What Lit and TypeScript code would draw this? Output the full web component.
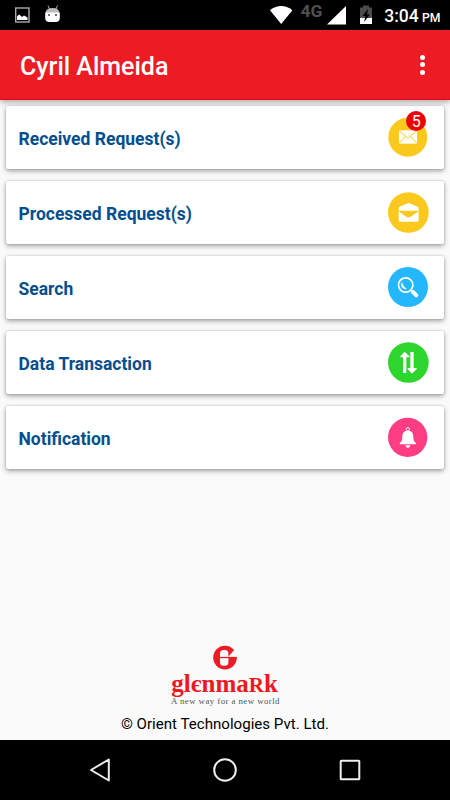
import { LitElement, html, css, svg } from "lit";
import { customElement } from "lit/decorators.js";

// Row glyphs share one 126x129 artboard (three units per pixel).
const rows = [
  {
    label: "Received Request(s)",
    badge: "5",
    icon: svg`<circle cx="113.5" cy="111.5" r="58.5" fill="#fbc91d"/>
      <rect x="87" y="91" width="54" height="40" fill="#fff"/>
      <path d="M87 91.500L114 115L141 91.500M87 130.500L106 110M141 130.500L122 110" fill="none" stroke="#fbc91d" stroke-width="3"/>`,
  },
  {
    label: "Processed Request(s)",
    icon: svg`<circle cx="115" cy="112.500" r="61" fill="#fbc91d"/>
      <path d="M86 101Q86 97 89 95.500L111 85.500Q115.500 83 120 85.500L143 95.500Q146 97 146 101V107H86Z" fill="#fff"/>
      <path d="M86 109L109 125Q115.500 129 122 125L146 109V136Q146 140 142 140H90Q86 140 86 136Z" fill="#fff"/>`,
  },
  {
    label: "Search",
    icon: svg`<circle cx="114" cy="111" r="60" fill="#25b7fd"/>
      <circle cx="107" cy="105" r="21.500" fill="none" stroke="#fff" stroke-width="5"/>
      <path d="M95 98Q91 115 109 117Q99 110 95 98Z" fill="#fff" stroke="#fff" stroke-width="2"/>
      <path d="M122 120L129 127" stroke="#fff" stroke-width="5"/>
      <path d="M129 126L139 136" stroke="#fff" stroke-width="12" stroke-linecap="round"/>`,
  },
  {
    label: "Data Transaction",
    icon: svg`<circle cx="115" cy="112.500" r="61" fill="#2dd52d"/>
      <path d="M104 80L118 94V97H109V144H99V97H91V94Z" fill="#fff"/>
      <path d="M121 81H131V129H140V132L126 146L113 132V129H121Z" fill="#fff"/>`,
  },
  {
    label: "Notification",
    icon: svg`<circle cx="113" cy="112" r="59" fill="#fe3d83"/>
      <circle cx="113.500" cy="88" r="5" fill="none" stroke="#fff" stroke-width="3"/>
      <path d="M113.500 93C126 91 129.500 100 130 110C130.500 121 132 124 138 129Q139 133 135 133H92Q88 133 89 129C95 124 96.500 121 97 110C97.500 100 101 91 113.500 93Z" fill="#fff"/>
      <path d="M106 136H121Q120 144 113.500 144Q107 144 106 136Z" fill="#fff"/>`,
  },
];

@customElement("app-root")
export class AppRoot extends LitElement {
  static styles = css`
    :host {
      display: flex;
      flex-direction: column;
      width: 450px;
      height: 800px;
      background: #fafafa;
      font-family: Roboto, "Liberation Sans", sans-serif;
      overflow: hidden;
    }
    svg { display: block; flex: none; }
    .status { height: 30px; background: #000; flex: none; }
    .bar {
      height: 70px;
      flex: none;
      box-sizing: border-box;
      padding: 3px 20px 0;
      display: flex;
      align-items: center;
      justify-content: space-between;
      background: #ed1c24;
      color: #fff;
      border-bottom: 1px solid #dc0c12;
      box-shadow: 0 2px 6px rgba(0, 0, 0, 0.35);
    }
    .title { font-size: 25px; font-weight: 500; white-space: nowrap; }
    .dots { display: flex; flex-direction: column; gap: 2.500px; padding: 0 5px 3px 0; }
    .dot { width: 5px; height: 5px; border-radius: 50%; background: #fff; }
    .list { display: flex; flex-direction: column; gap: 12px; padding: 6px 6px 0; }
    .card {
      height: 63px;
      box-sizing: border-box;
      padding: 0 15px 0 12.500px;
      display: flex;
      align-items: center;
      justify-content: space-between;
      background: #fff;
      border-radius: 2px;
      box-shadow: 0 2px 5px rgba(0, 0, 0, 0.36), 0 0 2px rgba(0, 0, 0, 0.18);
    }
    .label { color: #044e8c; font-size: 17.500px; font-weight: 700; padding-top: 2px; white-space: nowrap; }
    .icon { position: relative; }
    .badge {
      position: absolute;
      left: 19.300px;
      top: -5px;
      width: 20px;
      height: 20px;
      border-radius: 50%;
      background: #ec0000;
      color: #fff;
      font-size: 16px;
      line-height: 22px;
      text-align: center;
    }
    .footer {
      flex: 1;
      display: flex;
      flex-direction: column;
      align-items: center;
      justify-content: flex-end;
    }
    .mark { font-family: "Liberation Serif", serif; font-weight: 700; }
    .tagline { font-family: "Liberation Serif", serif; }
    .copy { font-size: 15.100px; line-height: 20px; color: #000; padding: 4px 0 6px; white-space: nowrap; }
    .nav { height: 60px; background: #000; flex: none; }
  `;

  render() {
    return html`
      <svg class="status" width="450" height="30" viewBox="0 0 450 30">
        <rect x="15.700" y="8" width="13.300" height="14" fill="none" stroke="#aaa" stroke-width="1.400"/>
        <path d="M17 20V16.500L19 14.500L21 16L22 17L24 15.500L25 16L27.500 17.500V20Z" fill="#fff"/>
        <path d="M48 5.500L49.500 9M57.500 5.500L56 9" stroke="#aaa" stroke-width="1"/>
        <path d="M45.500 13Q46 8 52.500 8Q59 8 59.500 13Z" fill="#bbb"/>
        <path d="M45.200 12.500H59.800V18Q59.800 22 55.500 22H49.500Q45.200 22 45.200 18Z" fill="#fff"/>
        <circle cx="49" cy="15" r="1" fill="#444"/><circle cx="56" cy="15" r="1" fill="#444"/>
        <path d="M270 10.200Q281.200 1.800 292.400 10.200L281.200 24Z" fill="#fff"/>
        <text x="300.500" y="16.800" font-size="16.500" font-weight="700" fill="#505050" textLength="22" lengthAdjust="spacingAndGlyphs">4G</text>
        <path d="M346 6V24.500H327Z" fill="#fff"/>
        <path d="M360 7.500H363V5.500H369V7.500H372V18H360Z" fill="#4d4d4d"/>
        <path d="M360 18H372V24H360Z" fill="#fff"/>
        <path d="M368 9L362.500 16H365.500L364 22L370 14.500H367Z" fill="#000"/>
        <text x="384.200" y="22" font-size="17.500" font-weight="500" fill="#fff" textLength="34.500" lengthAdjust="spacingAndGlyphs">3:04</text>
        <text x="422" y="22" font-size="12" font-weight="500" fill="#fff" textLength="18.500" lengthAdjust="spacingAndGlyphs">PM</text>
      </svg>
      <div class="bar">
        <span class="title">Cyril Almeida</span>
        <div class="dots"><span class="dot"></span><span class="dot"></span><span class="dot"></span></div>
      </div>
      <div class="list">
        ${rows.map(
          (r) => html`<div class="card">
            <span class="label">${r.label}</span>
            <div class="icon">
              <svg width="42" height="43" viewBox="51 48 126 129">${r.icon}</svg>
              ${r.badge ? html`<span class="badge">${r.badge}</span>` : null}
            </div>
          </div>`
        )}
      </div>
      <div class="footer">
        <svg width="120" height="66" viewBox="165 644 120 66">
          <circle cx="225" cy="657.600" r="11.800" fill="#ed1c24"/>
          <rect x="220" y="650" width="8.400" height="15.800" rx="3.600" fill="#fafafa"/>
          <path d="M228.400 656.800L234.500 649.500L239 648V657H228.400Z" fill="#fafafa"/>
          <path d="M220 656.900H237V658.200H220Z" fill="#ed1c24"/>
          <text class="mark" x="171.300" y="692.300" font-size="25" fill="#ee1820" textLength="106.500" lengthAdjust="spacingAndGlyphs">glєnma<tspan font-size="21">R</tspan>k</text>
          <text class="tagline" x="171" y="704" fill="#555" font-size="8.800" textLength="108.500">A new way for a new world</text>
        </svg>
        <div class="copy">© Orient Technologies Pvt. Ltd.</div>
      </div>
      <svg class="nav" width="450" height="60" viewBox="0 740 450 60" fill="none" stroke="#eee" stroke-width="2" stroke-linejoin="round">
        <path d="M108.800 759.500V780.500L91 770Z"/>
        <circle cx="225" cy="770" r="10.800"/>
        <rect x="340.700" y="760.700" width="18.600" height="18.600" rx="0.500"/>
      </svg>
    `;
  }
}
